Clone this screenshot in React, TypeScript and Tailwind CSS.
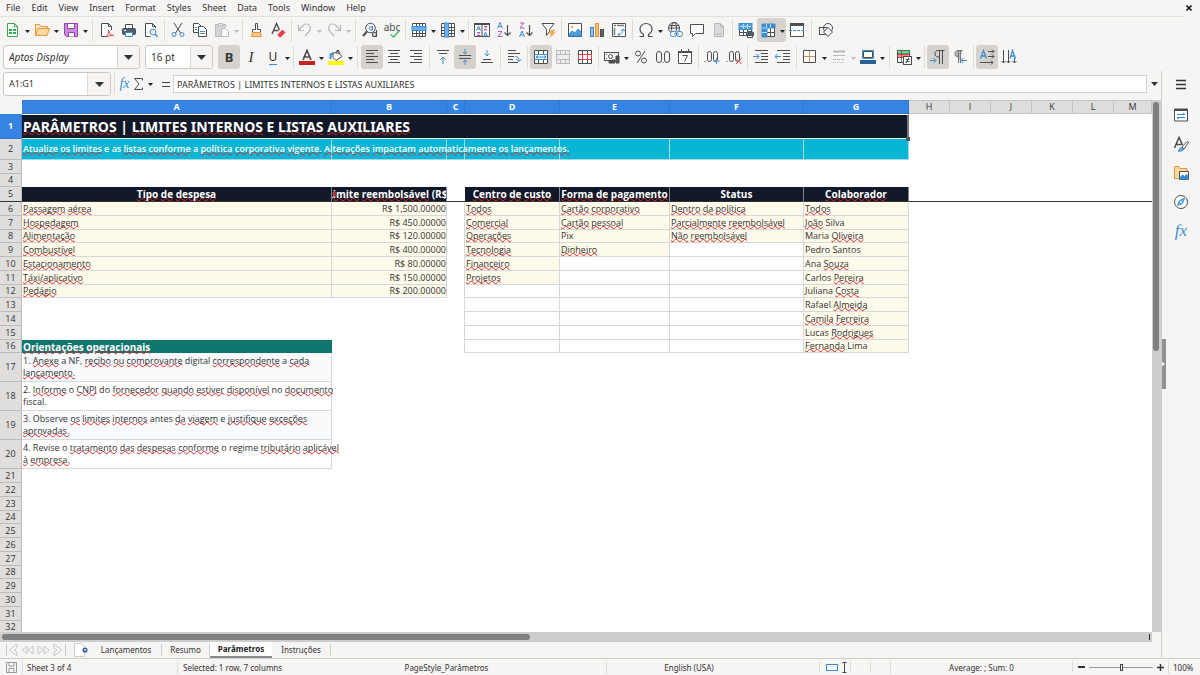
import type { ReactNode } from "react";

const FONT = "font-['Noto_Sans','Open_Sans',sans-serif]";

function Ico({ children, w = 16 }: { children: ReactNode; w?: number }) {
  return (
    <svg
      width={w}
      height="16"
      viewBox={`0 0 ${w} 16`}
      fill="none"
      stroke="#4d4d4d"
      strokeWidth="1"
      aria-hidden="true"
      className="shrink-0"
    >
      {children}
    </svg>
  );
}

function Caret({ dim }: { dim?: boolean }) {
  return (
    <svg width="5" height="3" viewBox="0 0 5 3" aria-hidden="true">
      <path d="M0 0h5L2.5 3z" fill={dim ? "#bdbdbd" : "#222"} />
    </svg>
  );
}

type ToolProps = {
  label: string;
  on?: boolean;
  menu?: boolean;
  dim?: boolean;
  children: ReactNode;
};

function Tool({ label, on, menu, dim, children }: ToolProps) {
  return (
    <button
      type="button"
      aria-label={label}
      aria-pressed={on}
      className={`flex h-6 shrink-0 items-center rounded-[3px] ${on ? "bg-[#d5d2ce]" : ""}`}
    >
      <span className={`flex w-[22px] justify-center ${dim ? "opacity-35" : ""}`}>{children}</span>
      {menu && (
        <span className="flex w-[7px] justify-center pt-0.5">
          <Caret dim={dim} />
        </span>
      )}
    </button>
  );
}

function Sep({ wide }: { wide?: boolean }) {
  return (
    <span className={`flex shrink-0 justify-center ${wide ? "w-[7px]" : "w-[5px]"}`}>
      <span className="h-[22px] w-px bg-[#dddbd8]" />
    </span>
  );
}

const BLUE = "#3b8fd0";
const PAGE = "M3.5 1.5h6l3 3v10h-9zM9.5 1.5v3h3";

function StandardBar() {
  return (
    <div className="flex h-[26px] items-center pl-0.5">
      <Tool label="New" menu>
        <Ico>
          <path d="M2.5 1.5h7l3 3v10h-10z" stroke="#35a853" fill="#fff" />
          <path d="M9.5 1.5v3h3" stroke="#35a853" />
          <rect x="4" y="7" width="7" height="5" fill="#35a853" stroke="none" />
          <path d="M4 9.5h7M7.5 7v5" stroke="#fff" />
        </Ico>
      </Tool>
      <Tool label="Open" menu>
        <Ico>
          <path d="M1.5 13.5v-11h4l1.5 2h6.5v2" fill="#fbe3bd" stroke="#e8943a" />
          <path d="M1.5 13.5l2.5-7h11.5l-2.5 7z" fill="#fcd9a0" stroke="#e8943a" />
        </Ico>
      </Tool>
      <Tool label="Save" menu>
        <Ico>
          <path d="M1.5 1.5h13v13h-11l-2-2z" fill="#c88bd8" stroke="#9a3fb0" />
          <path d="M4.5 1.5h7v5h-7z" fill="#fff" stroke="#9a3fb0" />
          <path d="M5.5 14.5v-4h6v4" fill="#fff" stroke="#9a3fb0" />
        </Ico>
      </Tool>
      <Sep wide />
      <Tool label="Export as PDF">
        <Ico>
          <path d="M12.5 8v-3.5l-3-3h-7v13h6" fill="#fff" />
          <path d="M9.5 1.5v3h3" />
          <path d="M7 15c2-2 3-4.5 2.5-7 .5 3 2 5 5 5.5-3-.5-6 .5-7.500 1.500z" stroke="#e0434b" />
        </Ico>
      </Tool>
      <Tool label="Print">
        <Ico>
          <rect x="1.5" y="6.5" width="13" height="6" rx="1" fill="#4f5f6c" stroke="#46535e" />
          <path d="M4.5 6V2.5h7V6" fill="#fff" />
          <path d="M4.5 10.5h7v4h-7z" fill="#fff" stroke={BLUE} />
          <path d="M3 8.5h2" stroke="#fff" />
        </Ico>
      </Tool>
      <Tool label="Print Preview">
        <Ico>
          <path d="M12.5 6V4.5l-3-3h-7v13h5" fill="#fff" />
          <path d="M9.5 1.5v3h3" />
          <circle cx="10" cy="10" r="3" stroke={BLUE} fill="#e6f2fb" />
          <path d="M12.2 12.2l2.5 2.5" stroke={BLUE} strokeWidth="1.5" />
        </Ico>
      </Tool>
      <Sep />
      <Tool label="Cut">
        <Ico>
          <path d="M4 1l6.5 10M12 1L5.5 11" />
          <circle cx="4" cy="12.5" r="2" stroke={BLUE} />
          <circle cx="12" cy="12.5" r="2" stroke={BLUE} />
        </Ico>
      </Tool>
      <Tool label="Copy">
        <Ico>
          <path d="M1.5 1.5h5l3 3v6h-8z" fill="#fff" />
          <path d="M6.5 4.5h5l3 3v7h-8z" fill="#fff" />
          <path d="M3 5.5h2M3 7.5h2M8 9.5h5M8 11.5h5" stroke={BLUE} />
        </Ico>
      </Tool>
      <Tool label="Paste" menu dim>
        <Ico>
          <path d="M7 14.5H1.5v-12h10v3" fill="#999" />
          <path d="M4.5 3.5v-2h4v2z" fill="#fff" />
          <path d="M7.5 6.5h4l3 3v5h-7z" fill="#fff" />
        </Ico>
      </Tool>
      <Sep />
      <Tool label="Clone Formatting">
        <Ico>
          <path d="M7.5 1.5h2v6h3v3h-8v-3h3z" fill="#fff" />
          <path d="M4.5 10.5h8l1 4h-10z" fill="#fbc98d" stroke="#e8943a" />
        </Ico>
      </Tool>
      <Tool label="Clear Direct Formatting">
        <Ico>
          <path d="M2 12L6.5 1.5 9.5 8M3.5 8.5h5" strokeWidth="1.4" />
          <path d="M8 12.5l4.5-4.5 2.5 2.5-4.5 4.5h-1z" fill="#e0434b" stroke="#e0434b" />
        </Ico>
      </Tool>
      <Sep />
      <Tool label="Undo" menu dim>
        <Ico>
          <path d="M1.5 3v5.500H7M2 8l4-4.500c2-2 5-2 6.500 0s1 4.500-1 6.500l-3.500 4" strokeWidth="1.200" />
        </Ico>
      </Tool>
      <Tool label="Redo" menu dim>
        <Ico>
          <path d="M14.500 3v5.500H9M14 8l-4-4.500c-2-2-5-2-6.500 0s-1 4.500 1 6.500l3.500 4" strokeWidth="1.200" />
        </Ico>
      </Tool>
      <Sep wide />
      <Tool label="Find and Replace">
        <Ico>
          <circle cx="8.500" cy="6" r="4.800" />
          <path d="M5 9.500L1 14" strokeWidth="2" />
          <path d="M10.500 4v4.500" stroke={BLUE} />
          <circle cx="8.800" cy="6.500" r="1.600" stroke={BLUE} />
          <circle cx="12.500" cy="12.500" r="2" fill="#f6f5f4" strokeWidth="1.200" />
          <path d="M14.500 8v7" strokeWidth="1.200" />
        </Ico>
      </Tool>
      <Tool label="Spelling">
        <span className="relative flex h-4 w-4 justify-center text-[10px] leading-[10px] text-[#4d4d4d]">
          abc
          <svg width="10" height="8" viewBox="0 0 10 8" className="absolute top-2 left-1.5" aria-hidden="true">
            <path d="M.5 4.500L3.500 7 9 1" fill="none" stroke="#35b86b" strokeWidth="1.400" />
          </svg>
        </span>
      </Tool>
      <Sep />
      <Tool label="Row" menu>
        <Ico>
          <path d="M1.5 1.5h13v13h-13zM1.5 11.5h13M5.5 1.5v13M8.5 1.5v13M11.5 1.5v13" fill="#fff" />
          <rect x="1" y="4.5" width="14" height="4" fill="#69b1e8" stroke={BLUE} />
        </Ico>
      </Tool>
      <Tool label="Column" menu>
        <Ico>
          <path d="M1.5 1.5h13v13h-13zM1.5 5.5h13M1.5 8.5h13M1.5 11.5h13M11.5 1.5v13" fill="#fff" />
          <rect x="4.500" y="1" width="4" height="14" fill="#69b1e8" stroke={BLUE} />
        </Ico>
      </Tool>
      <Sep />
      <Tool label="Sort">
        <Ico>
          <path d="M.5 1.5h15v13H.5zM8 2.500v12" fill="#fff" />
          <path d="M0 2h16" strokeWidth="2" />
          <path d="M2.500 8.500l2-4.500 2 4.500M3 7h3M9.500 14.500l2-4.500 2 4.500M10 13h3" stroke={BLUE} />
          <path d="M3 10.500h3l-3 3h3.500M10 4.500h3l-3 3.500h3.500" stroke="#b455c4" />
        </Ico>
      </Tool>
      <Tool label="Sort Ascending">
        <Ico>
          <path d="M1.5 6.5L4 .5l2.500 6M2.500 4.500h3" stroke={BLUE} />
          <path d="M2 9.500h4l-4 5h4.500" stroke="#b455c4" />
          <path d="M11.500 3v10.500M8.500 10.500l3 3 3-3" strokeWidth="1.200" />
        </Ico>
      </Tool>
      <Tool label="Sort Descending">
        <Ico>
          <path d="M2 1h4L2 6h4.500" stroke="#b455c4" />
          <path d="M1.500 15L4 9l2.500 6M2.500 13h3" stroke={BLUE} />
          <path d="M11.500 3v10.500M8.500 10.500l3 3 3-3" strokeWidth="1.200" />
        </Ico>
      </Tool>
      <Tool label="AutoFilter">
        <Ico>
          <path d="M2 1.500h12L9.500 7.500v2l-3 4v-6z" fill="#fff" />
          <path d="M11.500 8h3l-1.500 2.500h2L10.500 15l1-3.500h-2z" fill="#f7a94a" stroke="#f09a33" strokeWidth=".5" />
        </Ico>
      </Tool>
      <Sep />
      <Tool label="Insert Image">
        <Ico>
          <path d="M1.5 1.5h13v13h-13z" fill="#fff" />
          <path d="M2 14v-2l3-3 3 2 3-4 3 3v4z" fill="#4e9fdd" stroke={BLUE} />
          <circle cx="5" cy="5" r="1.200" fill="#f7a94a" stroke="none" />
        </Ico>
      </Tool>
      <Tool label="Insert Chart">
        <Ico>
          <rect x="1.5" y="5.5" width="3" height="9" fill="#8cc4ee" stroke={BLUE} />
          <rect x="6.5" y="1.5" width="3" height="13" fill="#fbc070" stroke="#e8943a" />
          <rect x="11.5" y="7.5" width="3" height="7" fill="#666" />
        </Ico>
      </Tool>
      <Tool label="Pivot Table">
        <Ico>
          <path d="M1.5 1.5h13v13h-13z" fill="#fff" />
          <path d="M3 3.5h2M6 3.5h7M3.5 6v7" strokeWidth="1.5" stroke="#777" />
          <path d="M7 12.5c4 0 5-2 5-5M10 9l2-2 2 2M9 10.5l-2 2 2 2" stroke={BLUE} />
        </Ico>
      </Tool>
      <Sep />
      <Tool label="Special Character" menu>
        <Ico>
          <path
            d="M1.500 14.500h4v-2C3 11 2 9 2 7c0-3 2.500-5.500 6-5.500S14 4 14 7c0 2-1 4-3.500 5.500v2h4"
            strokeWidth="1.200"
          />
        </Ico>
      </Tool>
      <Tool label="Insert Hyperlink">
        <Ico>
          <circle cx="7" cy="6" r="5.500" />
          <ellipse cx="7" cy="6" rx="2.500" ry="5.500" />
          <path d="M1.500 6h11M2.500 3.500h9" />
          <rect x="3.500" y="9.500" width="6" height="5" rx="2" fill="#f6f5f4" stroke={BLUE} />
          <rect x="9.500" y="9.500" width="6" height="5" rx="2" fill="#f6f5f4" stroke={BLUE} />
          <path d="M7 12h5" stroke={BLUE} />
        </Ico>
      </Tool>
      <Tool label="Insert Comment">
        <Ico>
          <path d="M1.5 2.5h13v9h-8l-3 3v-3h-2z" fill="#fff" />
        </Ico>
      </Tool>
      <Tool label="Headers and Footers" dim>
        <Ico>
          <path d={PAGE} fill="#aaa" />
          <path d="M5 12h6" />
        </Ico>
      </Tool>
      <Sep />
      <Tool label="Define Print Area">
        <Ico>
          <path d="M1.5 1.5h12v12h-12zM1.5 10.5h12M5.5 1.5v12M9.5 1.5v12" fill="#fff" />
          <rect x="1" y="1.5" width="13" height="6" fill="#4e9fdd" stroke={BLUE} />
          <path d="M5.5 2v5M9.5 2v5M2 4.5h11" stroke="#b9dcf5" />
          <rect x="8" y="10" width="8" height="4" fill="#4f5f6c" stroke="none" />
          <path d="M9.5 9.5h5M9.5 13.5h5v2h-5z" fill="#fff" />
        </Ico>
      </Tool>
      <Tool label="Freeze Rows and Columns" on menu>
        <Ico>
          <path d="M2.5 2.5h12v12h-12zM2.5 10.5h12M10.5 5v10" fill="#fff" />
          <path d="M2 2h13v4H7v9H2z" fill="#3b8fd0" stroke={BLUE} />
          <path d="M6.5 2v4M10.5 2v4M2 6h5M2 10.5h5" stroke="#b9dcf5" />
        </Ico>
      </Tool>
      <Tool label="Split Window">
        <Ico>
          <path d="M1.5 1.5h13v13h-13z" fill="#fff" />
          <path d="M1 2.5h14" strokeWidth="3" />
          <path d="M0 8.5h16" stroke={BLUE} strokeDasharray="3 1" />
        </Ico>
      </Tool>
      <Sep wide />
      <Tool label="Show Draw Functions">
        <Ico>
          <rect x="1.5" y="5.5" width="8" height="7" />
          <circle cx="10" cy="6" r="4.5" />
          <path d="M10 5.5l4.5 4.5-4.5 4.5L5.5 10z" fill="#f6f5f4" />
        </Ico>
      </Tool>
    </div>
  );
}

function Combo({ label, value, className, drop }: { label: string; value: string; className: string; drop: string }) {
  return (
    <div className={`flex h-6 shrink-0 overflow-hidden rounded-[3px] border border-[#cdc7c2] bg-white ${className}`}>
      <input aria-label={label} defaultValue={value} className="w-0 min-w-0 flex-1 bg-transparent pl-[5px] outline-none" />
      <button
        type="button"
        aria-label={`${label} list`}
        className={`flex items-center justify-center border-l border-[#dcd8d4] bg-[#f6f5f4] ${drop}`}
      >
        <svg width="9" height="5" viewBox="0 0 9 5" aria-hidden="true">
          <path d="M0 0h9L4.500 5z" fill="#333" />
        </svg>
      </button>
    </div>
  );
}

function Lines({ d }: { d: string }) {
  return (
    <Ico>
      <path d={d} />
    </Ico>
  );
}

function FormattingBar() {
  return (
    <div className="flex h-7 items-center pl-[3px]">
      <Combo label="Font Name" value="Aptos Display" className="w-[137px] text-[10px] italic" drop="w-[22px]" />
      <span className="w-[5px]" />
      <Combo label="Font Size" value="16 pt" className="w-[68px] text-[10px]" drop="w-[22px]" />
      <span className="w-[5px]" />
      <Tool label="Bold" on>
        <b className="text-[13px] leading-4">B</b>
      </Tool>
      <Tool label="Italic">
        <i className="font-['Liberation_Serif',serif] text-[15px] leading-4">I</i>
      </Tool>
      <Tool label="Underline" menu>
        <span className="border-b border-[#3b8fd0] text-[12px] leading-[14px]">U</span>
      </Tool>
      <Sep />
      <Tool label="Font Color" menu>
        <Ico>
          <path d="M4 11L8 1.500 12 11M5.500 8h5" strokeWidth="1.700" />
          <rect x="0" y="12" width="16" height="4" fill="#c9211e" stroke="none" />
        </Ico>
      </Tool>
      <Tool label="Highlighting" menu>
        <Ico>
          <path d="M5 4.500l5-2 4 5-6 4-3-3z" fill="#fff" />
          <path d="M9 5V1.500h2v4" />
          <path d="M2.500 10V5.500l3-1.500" stroke={BLUE} strokeWidth="2" />
          <rect x="0" y="12" width="16" height="4" fill="#ffff00" stroke="none" />
        </Ico>
      </Tool>
      <Sep wide />
      <Tool label="Align Left" on>
        <Lines d="M2 1.5h12M2 4.5h8M2 7.5h12M2 10.5h8M2 13.5h12" />
      </Tool>
      <Tool label="Center Horizontally">
        <Lines d="M2 1.5h12M4 4.5h8M2 7.5h12M4 10.5h8M2 13.5h12" />
      </Tool>
      <Tool label="Align Right">
        <Lines d="M2 1.5h12M6 4.5h8M2 7.5h12M6 10.5h8M2 13.5h12" />
      </Tool>
      <Sep />
      <Tool label="Align Top">
        <Ico>
          <path d="M2 1.5h12M4 4.5h8" />
          <path d="M8 15V8M5.5 10.5L8 8l2.500 2.500" stroke={BLUE} />
        </Ico>
      </Tool>
      <Tool label="Center Vertically" on>
        <Ico>
          <path d="M2 6.5h12M2 9.5h12" />
          <path d="M8 0v5M6 3l2 2 2-2M8 16v-5M6 13l2-2 2 2" stroke={BLUE} />
        </Ico>
      </Tool>
      <Tool label="Align Bottom">
        <Ico>
          <path d="M4 10.5h8M2 13.5h12" />
          <path d="M8 1v6M5.5 4.5L8 7l2.500-2.500" stroke={BLUE} />
        </Ico>
      </Tool>
      <Sep />
      <Tool label="Wrap Text">
        <Ico>
          <path d="M2 1.5h8M2 4.5h12M2 7.5h6M2 10.5h5M2 13.5h10" />
          <path d="M9 7.5c3 0 4 1 4 5M10.5 10l2.500 2.500 2.500-2.500" stroke={BLUE} />
        </Ico>
      </Tool>
      <Sep />
      <Tool label="Merge and Center Cells" on>
        <Ico>
          <path d="M1.5 1.5h13v13h-13zM5.5 1.5v4M10.5 1.5v4M5.5 11v3.500M10.5 11v3.500" fill="#fff" />
          <path d="M1.5 5.5h13M1.5 10.5h13" stroke={BLUE} />
          <path d="M3 8h10M5 6.500L3 8l2 1.500M11 6.500L13 8l-2 1.500" stroke={BLUE} />
        </Ico>
      </Tool>
      <Tool label="Merge Cells" dim>
        <Ico>
          <path
            d="M1.5 1.5h13v13h-13zM1.5 5.5h13M1.5 10.5h13M5.5 1.5v4M10.5 1.5v4M5.5 11v3.500M10.5 11v3.500"
            fill="#ddd"
          />
        </Ico>
      </Tool>
      <Tool label="Unmerge Cells">
        <Ico>
          <path d="M1.5 1.5h13v13h-13zM5.5 1.5v4M10.5 1.5v4M5.5 11v3.500M10.5 11v3.500" fill="#fff" />
          <path d="M1.5 5.5h13v5h-13zM5.5 5.5v5M10.5 5.5v5" stroke="#e0434b" />
        </Ico>
      </Tool>
      <Sep />
      <Tool label="Format as Currency" menu>
        <Ico>
          <rect x=".5" y="3.5" width="14" height="8" />
          <circle cx="6.5" cy="7.5" r="2" />
          <path d="M2 5.5h1M2 9.5h1" />
          <path d="M8 14V11h3v3zM12 14V7h3v7zM5 14v-2h3v2z" fill="#555" />
        </Ico>
      </Tool>
      <Tool label="Format as Percent">
        <Ico>
          <circle cx="5" cy="4.500" r="2.500" />
          <circle cx="11" cy="11.500" r="2.500" />
          <path d="M12 2l-8 12" />
        </Ico>
      </Tool>
      <Tool label="Format as Number">
        <Ico>
          <rect x="1.500" y="2.500" width="5" height="11" rx="2.500" />
          <rect x="9.500" y="2.500" width="5" height="11" rx="2.500" />
          <path d="M7.500 13.500h1" />
        </Ico>
      </Tool>
      <Tool label="Format as Date">
        <Ico>
          <path d="M1.5 2.5h13v12h-13z" fill="#fff" />
          <path d="M1 3h14" strokeWidth="2" />
          <path d="M4.5 0v3M11.5 0v3M5.5 6.5h5l-3 6" />
        </Ico>
      </Tool>
      <Sep />
      <Tool label="Add Decimal Place">
        <Ico>
          <rect x="3.500" y="2.500" width="4" height="10" rx="2" />
          <rect x="9.500" y="2.500" width="4" height="10" rx="2" />
          <path d="M.5 12.500h1" />
          <path d="M12.500 9v6M9.500 12h6" stroke={BLUE} />
        </Ico>
      </Tool>
      <Tool label="Delete Decimal Place">
        <Ico>
          <rect x="3.500" y="2.500" width="4" height="10" rx="2" />
          <rect x="9.500" y="2.500" width="4" height="10" rx="2" />
          <path d="M.5 12.500h1" />
          <path d="M10 9.500l5.500 5.500M15.500 9.500L10 15" stroke="#e0434b" />
        </Ico>
      </Tool>
      <Sep />
      <Tool label="Increase Indent">
        <Ico>
          <path d="M2 1.5h13M8 4.5h7M8 7.5h7M8 10.5h7M2 13.5h13" />
          <path d="M0 7.5h6M3.5 5L6 7.5 3.5 10" stroke={BLUE} />
        </Ico>
      </Tool>
      <Tool label="Decrease Indent">
        <Ico>
          <path d="M2 1.5h13M8 4.5h7M8 7.5h7M8 10.5h7M2 13.5h13" />
          <path d="M6 7.5H0M2.5 5L0 7.5 2.5 10" stroke={BLUE} />
        </Ico>
      </Tool>
      <Sep />
      <Tool label="Borders" menu>
        <Ico>
          <path d="M1.5 1.5h12v12h-12z" fill="#fff" />
          <path d="M7.5 2v11M2 7.5h11" stroke="#c98f5a" />
        </Ico>
      </Tool>
      <Tool label="Border Style" menu dim>
        <Ico>
          <path d="M2 2.5h12" strokeWidth="2" />
          <path d="M2 6.5h12" />
          <path d="M2 10.5h12" strokeDasharray="3 1" />
          <path d="M2 13.5h12" strokeDasharray="1 1" />
        </Ico>
      </Tool>
      <Tool label="Border Color" menu>
        <Ico>
          <path d="M2.5 1.5h11v8h-11z" fill="#fff" stroke={BLUE} />
          <path d="M3.5 2.5h9v6h-9z" />
          <rect x="0" y="11" width="16" height="4" fill="#2a6099" stroke="none" />
        </Ico>
      </Tool>
      <Sep wide />
      <Tool label="Conditional" menu>
        <Ico>
          <path d="M1.5 1.5h12v12h-12z" fill="#fff" />
          <rect x="1.5" y="1.5" width="12" height="3" fill="#7fd09a" stroke="#35a853" />
          <rect x="1.5" y="5.500" width="12" height="3" fill="#f0898d" stroke="#e0434b" />
          <path d="M1.5 1.5h12v12h-12zM5.5 1.5v12" strokeWidth=".7" />
          <rect x="7.5" y="7.5" width="8" height="8" fill="#fff" />
          <path d="M9.5 10.5h4M9.5 12.5h4M13 9l-3 5" />
        </Ico>
      </Tool>
      <Sep />
      <Tool label="Left-To-Right" on>
        <Ico>
          <path d="M9.5 15V1.5h5M12.5 15V1.5M9.5 1.5H8c-4 0-4 6.500 0 6.500h1" />
          <path d="M0 11.5h6M3.5 9L6 11.5 3.5 14" stroke={BLUE} />
        </Ico>
      </Tool>
      <Tool label="Right-To-Left">
        <Ico>
          <path d="M6.500 14V1.5h4M8.500 14V1.5M6.500 1.5H6c-4 0-4 6.500 0 6.500z" fill="#bbb" stroke="#777" />
          <path d="M15 11.5H9M11.5 9L9 11.5l2.500 2.500" stroke={BLUE} />
        </Ico>
      </Tool>
      <Sep />
      <Tool label="Text Direction Left To Right" on>
        <Ico>
          <path d="M1.5 9.500L4.500 1.500l3 8M2.500 7h4" stroke={BLUE} strokeWidth="1.300" />
          <path d="M9 2.500h6M13 .5l2 2-2 2M9 7.500h6M13 5.500l2 2-2 2M1 13.500h13M12 11.500l2 2-2 2" />
        </Ico>
      </Tool>
      <Tool label="Text Direction Top To Bottom">
        <Ico>
          <path d="M9 9.500l2.500-8 3 8M10 7h4" stroke={BLUE} strokeWidth="1.300" />
          <path d="M2.500 1v13M.5 12l2 2 2-2M7.500 1v13M5.500 12l2 2 2-2M13.500 9v5M11.500 12l2 2 2-2" />
        </Ico>
      </Tool>
    </div>
  );
}

function FormulaBar() {
  return (
    <div className="mb-[3px] flex h-[26px] items-center pl-[3px]">
      <Combo label="Name Box" value="A1:G1" className="w-[108px] text-[9px]" drop="w-[23px]" />
      <Sep wide />
      <button
        type="button"
        aria-label="Function Wizard"
        className="w-[13px] font-['Liberation_Serif',serif] text-[14px] leading-5 text-[#3b8fd0] italic"
      >
        fx
      </button>
      <button type="button" aria-label="Select Function" className="ml-0.5 flex w-[26px] items-center gap-1">
        <svg width="11" height="12" viewBox="0 0 11 12" fill="none" stroke="#4d4d4d" aria-hidden="true">
          <path d="M9.5 2.500V.5h-8l4.500 5.500-4.500 5.500h8v-2" />
        </svg>
        <Caret />
      </button>
      <button type="button" aria-label="Formula" className="flex w-3 flex-col gap-[3px] pl-[3px]">
        <span className="h-px w-2 bg-[#444]" />
        <span className="h-px w-2 bg-[#444]" />
      </button>
      <input
        aria-label="Input line"
        defaultValue="PARÂMETROS | LIMITES INTERNOS E LISTAS AUXILIARES"
        className="ml-[2px] h-[18px] min-w-0 flex-1 border border-[#d5d2ce] bg-white px-[3px] text-[9px] outline-none"
      />
      <button type="button" aria-label="Expand Formula Bar" className="flex w-[14px] justify-center">
        <svg width="7" height="4" viewBox="0 0 7 4" aria-hidden="true">
          <path d="M0 0h7L3.500 4z" fill="#333" />
        </svg>
      </button>
    </div>
  );
}

// words in [brackets] are flagged by the spell checker
function Spell({ text }: { text: string }) {
  return (
    <>
      {text.split(/[[\]]/).map((part, i) =>
        i % 2 ? (
          <span
            key={i}
            className="underline decoration-[#e02424] decoration-wavy decoration-1 underline-offset-[-1px] [text-decoration-skip-ink:none]"
          >
            {part}
          </span>
        ) : (
          part
        ),
      )}
    </>
  );
}

const columns = [
  { name: "A", width: 310 },
  { name: "B", width: 115 },
  { name: "C", width: 18 },
  { name: "D", width: 95 },
  { name: "E", width: 110 },
  { name: "F", width: 134 },
  { name: "G", width: 105 },
  { name: "H", width: 41 },
  { name: "I", width: 41 },
  { name: "J", width: 41 },
  { name: "K", width: 41 },
  { name: "L", width: 41 },
  { name: "M", width: 0 },
];

const heights = [
  25, 21, 14, 13, 15, 14, 14, 13, 14, 14, 14, 13, 14, 14, 14, 13, 29, 29, 29, 29, 14, 14, 14, 13, 14, 14, 14, 13, 14,
  14, 14, 13,
];

const expenses = [
  ["[Passagem] [aérea]", "R$ 1,500.00000"],
  ["[Hospedagem]", "R$ 450.00000"],
  ["[Alimentação]", "R$ 120.00000"],
  ["[Combustível]", "R$ 400.00000"],
  ["[Estacionamento]", "R$ 80.00000"],
  ["[Táxi/aplicativo]", "R$ 150.00000"],
  ["[Pedágio]", "R$ 200.00000"],
];

const lists: Record<string, string[]> = {
  D: ["[Todos]", "[Comercial]", "[Operações]", "[Tecnologia]", "[Financeiro]", "[Projetos]"],
  E: ["[Cartão] [corporativo]", "[Cartão] [pessoal]", "Pix", "[Dinheiro]"],
  F: ["[Dentro] [da] [política]", "[Parcialmente] [reembolsável]", "[Não] [reembolsável]"],
  G: [
    "[Todos]",
    "[João] Silva",
    "Maria [Oliveira]",
    "Pedro Santos",
    "Ana [Souza]",
    "Carlos [Pereira]",
    "Juliana [Costa]",
    "Rafael [Almeida]",
    "[Camila] [Ferreira]",
    "Lucas [Rodrigues]",
    "[Fernanda] Lima",
  ],
};

const headings: Record<string, string> = {
  A: "[Tipo] [de] [despesa]",
  B: "[Limite] [reembolsável] (R$)",
  D: "[Centro] [de] [custo]",
  E: "[Forma] [de] [pagamento]",
  F: "Status",
  G: "[Colaborador]",
};

const notes = [
  ["1. [Anexe] a NF, [recibo] [ou] [comprovante] digital [correspondente] a [cada]", "[lançamento.]"],
  ["2. [Informe] o [CNPJ] do [fornecedor] [quando] [estiver] [disponível] no [documento]", "fiscal."],
  ["3. Observe [os] [limites] [internos] antes [da] [viagem] e [justifique] [exceções]", "[aprovadas.]"],
  ["4. Revise o [tratamento] [das] [despesas] [conforme] o regime [tributário] [aplicável]", "[à] [empresa.]"],
];

const CREAM = "border-r border-b border-[#d5d8dc] bg-[#fffbeb]";
const PLAIN = "border-r border-b border-[#d5d8dc] bg-white";

function cell(row: number, col: string): ReactNode {
  if (row === 2 && col <= "G") {
    return (
      <td key={col} className="border-r border-b border-[#9fdde9] bg-[#06b6d4] p-0 pl-px font-semibold text-white">
        {col === "A" && (
          <span className="relative">
            <Spell text="[Atualize] [os] [limites] e as [listas] [conforme] a [política] [corporativa] [vigente.] [Alterações] [impactam] [automaticamente] [os] [lançamentos.]" />
          </span>
        )}
      </td>
    );
  }
  if (row === 5) {
    const text = headings[col];
    return (
      <td
        key={col}
        className={`relative overflow-hidden border-b border-b-[#333] p-0 text-[10px] font-bold text-white ${
          text ? "border-r border-r-[#7c828e] bg-[#111827]" : ""
        }`}
      >
        {text && (
          <div className="flex justify-center">
            <span>
              <Spell text={text} />
            </span>
          </div>
        )}
        {col === "B" && (
          <svg width="3" height="6" viewBox="0 0 3 6" className="absolute top-1 left-0" aria-hidden="true">
            <path d="M3 0v6L0 3z" fill="#e02424" />
          </svg>
        )}
      </td>
    );
  }
  if (row >= 6 && row <= 12 && (col === "A" || col === "B")) {
    return (
      <td key={col} className={`${CREAM} p-0 ${col === "B" ? "text-right" : "pl-px"}`}>
        <Spell text={expenses[row - 6][col === "A" ? 0 : 1]} />
      </td>
    );
  }
  if (row >= 6 && row <= 16 && lists[col]) {
    const text = lists[col][row - 6];
    return (
      <td key={col} className={`${text ? CREAM : PLAIN} p-0 pl-px`}>
        {text && <Spell text={text} />}
      </td>
    );
  }
  if (row >= 6 && row <= 16 && col === "C") {
    return <td key={col} className="border-r border-[#d5d8dc] p-0" />;
  }
  if (row === 16 && col === "A") {
    return (
      <td key={col} className="bg-[#0f766e] p-0 pl-px text-[10px] font-bold text-white">
        <Spell text="[Orientações] [operacionais]" />
      </td>
    );
  }
  if (row >= 17 && row <= 20 && col === "A") {
    return (
      <td key={col} className={`border-r border-b border-[#d5d8dc] p-0 pl-px ${row % 2 ? "bg-[#f8fafc]" : "bg-white"}`}>
        {notes[row - 17].map((line) => (
          <div key={line}>
            <Spell text={line} />
          </div>
        ))}
      </td>
    );
  }
  return <td key={col} className="p-0" />;
}

function Sheet() {
  return (
    <div className="min-h-0 min-w-0 flex-1 overflow-hidden bg-white">
      <table className="w-full table-fixed border-separate border-spacing-0 font-['Open_Sans','Noto_Sans',sans-serif] text-[9px] leading-3 whitespace-nowrap text-[#333]">
        <colgroup>
          <col className="w-[22px]" />
          {columns.map((c) => (
            <col key={c.name} style={c.width ? { width: c.width } : undefined} />
          ))}
        </colgroup>
        <thead>
          <tr className="h-[14px]">
            <th className="bg-[#f6f5f4] p-0" aria-label="Select all" />
            {columns.map((c) => (
              <th
                key={c.name}
                className={`border-t border-r border-b p-0 ${
                  c.name <= "G"
                    ? "border-[#2f76cf] bg-[#3584e4] font-bold text-white"
                    : "border-[#c4c3c1] bg-[#dfdedc] font-normal"
                }`}
              >
                {c.name}
              </th>
            ))}
          </tr>
        </thead>
        <tbody>
          {heights.map((h, i) => {
            const row = i + 1;
            return (
              <tr key={row} style={{ height: h }}>
                <th
                  className={`border-r border-b p-0 text-center ${
                    row === 1
                      ? "border-[#2f76cf] bg-[#3584e4] font-bold text-white"
                      : row === 5
                        ? "border-r-[#bdbcba] border-b-[#333] bg-[#dfdedc] font-normal"
                        : "border-[#bdbcba] bg-[#dfdedc] font-normal"
                  }`}
                >
                  {row}
                </th>
                {row === 1 ? (
                  <>
                    <td
                      colSpan={7}
                      className={`relative border-y border-r-2 border-white border-r-[#777] bg-[#111827] p-0 pl-px text-[14px] leading-[18px] font-bold text-white ${FONT}`}
                    >
                      <Spell text="[PARÂMETROS] | [LIMITES] [INTERNOS] E [LISTAS] [AUXILIARES]" />
                      <span className="absolute -right-[3px] -bottom-[3px] size-1 bg-[#555]" />
                    </td>
                    <td colSpan={6} className="p-0" />
                  </>
                ) : (
                  columns.map((c) => cell(row, c.name))
                )}
              </tr>
            );
          })}
        </tbody>
      </table>
    </div>
  );
}

function Sidebar() {
  return (
    <aside className="flex w-[39px] shrink-0 border-l border-[#d0cecb]">
      <div className="flex w-1 flex-col pt-[268px]">
        <button type="button" aria-label="Hide sidebar" className="flex h-[50px] w-1 items-center bg-[#919191]">
          <svg width="3" height="4" viewBox="0 0 3 4" aria-hidden="true">
            <path d="M0 0l3 2-3 2z" fill="#fff" />
          </svg>
        </button>
      </div>
      <nav className="flex flex-1 flex-col items-center gap-[13px] pt-[5px] pr-1">
        <button type="button" aria-label="Sidebar Settings" className="mb-0.5">
          <Ico>
            <path d="M3 4.5h10M3 8.5h10M3 12.5h10" strokeWidth="1.5" stroke="#333" />
          </Ico>
        </button>
        <button type="button" aria-label="Properties">
          <Ico>
            <path d="M1.5 2h13v12h-13z" fill="#fff" />
            <path d="M1 3h14" strokeWidth="2" />
            <path d="M4 7.500h8l-2-1.500M12 10.500H4l2 1.500" stroke={BLUE} />
          </Ico>
        </button>
        <button type="button" aria-label="Styles">
          <Ico>
            <path d="M1.5 12L6 1.500 9.500 9M3.500 8.500h5" strokeWidth="1.500" />
            <path d="M9 11l5-5.500 1.500 1L11 13z" fill="#fff" />
            <path d="M5 15c2 0 1-3.500 4-3.500l1.500 1.500c0 2-3 2.500-5.500 2z" fill="#69b1e8" stroke={BLUE} />
          </Ico>
        </button>
        <button type="button" aria-label="Gallery">
          <Ico>
            <path d="M1.5 13.5v-12h4l1.500 2h7v10z" fill="#fcd9a0" stroke="#e8943a" />
            <path d="M6.5 6.5h9v8h-9z" fill="#fff" />
            <path d="M7 14v-1.500l2.500-2.500 2 1.500 2-2 1.500 2V14z" fill="#3b8fd0" stroke={BLUE} />
          </Ico>
        </button>
        <button type="button" aria-label="Navigator">
          <Ico>
            <circle cx="8" cy="8" r="6.5" fill="#fff" />
            <path d="M11.5 4.5L9.5 9.5 4.5 11.5l2-5z" fill="#69b1e8" stroke={BLUE} />
            <circle cx="8" cy="8" r="1" fill="#fff" stroke="none" />
          </Ico>
        </button>
        <button
          type="button"
          aria-label="Functions"
          className="h-4 font-['Liberation_Serif',serif] text-[17px] leading-4 text-[#3b8fd0] italic"
        >
          fx
        </button>
      </nav>
    </aside>
  );
}

function SheetTabs() {
  return (
    <div className="flex h-4 items-center text-[8px] leading-3">
      <div className="flex w-[74px] pl-1.5">
        <svg width="60" height="14" viewBox="0 0 60 14" fill="none" stroke="#cbc9c7" aria-hidden="true">
          <path d="M.5 1v12M11 1L3 7l8 6V9l-3-2 3-2zM21 3l-5 4 5 4zM27 3l-5 4 5 4zM32 3l5 4-5 4zM38 3l5 4-5 4zM48 1l8 6-8 6V9l3-2-3-2zM59.500 1v12" />
        </svg>
      </div>
      <button type="button" aria-label="Add Sheet" className="flex w-[17px]">
        <svg width="14" height="14" viewBox="0 0 14 14" fill="none" aria-hidden="true">
          <path d="M.5.500h7l3 3v10H.5z" fill="#fff" stroke="#d0cecb" />
          <circle cx="11" cy="7" r="1.800" stroke="#2c5fa8" strokeWidth="1.500" />
        </svg>
      </button>
      <button type="button" className="w-[71px] border-r border-[#cfcdca]">
        Lançamentos
      </button>
      <button type="button" className="w-12 border-r border-[#cfcdca]">
        Resumo
      </button>
      <button type="button" className="h-4 w-[62px] border-b-2 border-[#8a8a8a] bg-white font-bold text-[#222]">
        Parâmetros
      </button>
      <button type="button" className="w-[59px] border-r border-[#cfcdca]">
        Instruções
      </button>
    </div>
  );
}

function StatusBar() {
  const line = "border-l border-[#dddbd8]";
  return (
    <footer className="flex h-[17px] items-center border-t border-[#d0cecb] text-[8px] leading-[13px] whitespace-nowrap">
      <div className="flex w-[22px] justify-center">
        <svg width="11" height="11" viewBox="0 0 11 11" fill="none" stroke="#999" aria-hidden="true">
          <path d="M.5.500h10v10h-10zM3 .5v3.500h5V.5M3 10.500v-4h5v4" />
        </svg>
      </div>
      <div className={`w-[155px] pl-1 ${line}`}>Sheet 3 of 4</div>
      <div className={`flex-1 pl-[5px] ${line}`}>Selected: 1 row, 7 columns</div>
      <div className="w-[319px] shrink-0 text-center">PageStyle_Parâmetros</div>
      <div className={`w-[213px] shrink-0 pr-12 text-center ${line}`}>English (USA)</div>
      <div className={`flex w-[31px] items-center gap-1 pl-1.5 ${line}`}>
        <span className="h-[7px] w-3 border border-[#3b8fd0]" />
        <svg width="5" height="11" viewBox="0 0 5 11" stroke="#444" fill="none" aria-hidden="true">
          <path d="M.5.500h4M2.500.500v10M.5 10.500h4" />
        </svg>
      </div>
      <div className={`h-3 w-5 ${line}`} />
      <div className={`h-3 w-5 ${line}`} />
      <div className={`w-[182px] shrink-0 text-center ${line}`}>Average: ; Sum: 0</div>
      <div className={`flex h-3 w-24 shrink-0 items-center gap-1 pl-[5px] ${line}`}>
        <button type="button" aria-label="Zoom out" className="h-[2px] w-[7px] bg-[#333]" />
        <input
          type="range"
          aria-label="Zoom"
          min={20}
          max={180}
          defaultValue={100}
          className="h-2 w-16 appearance-none bg-[linear-gradient(#999,#999)] bg-[length:100%_1px] bg-center bg-no-repeat [&::-webkit-slider-thumb]:h-[7px] [&::-webkit-slider-thumb]:w-[3px] [&::-webkit-slider-thumb]:appearance-none [&::-webkit-slider-thumb]:border [&::-webkit-slider-thumb]:border-[#444] [&::-webkit-slider-thumb]:bg-white"
        />
        <button type="button" aria-label="Zoom in" className="flex">
          <svg width="7" height="7" viewBox="0 0 7 7" stroke="#333" strokeWidth="1.5" aria-hidden="true">
            <path d="M3.5 0v7M0 3.500h7" />
          </svg>
        </button>
      </div>
      <div className={`w-8 shrink-0 pl-1 ${line}`}>100%</div>
    </footer>
  );
}

const menus = ["File", "Edit", "View", "Insert", "Format", "Styles", "Sheet", "Data", "Tools", "Window", "Help"];

export default function App() {
  return (
    <div className={`flex h-screen flex-col overflow-hidden bg-[#f6f5f4] text-[#333] ${FONT}`}>
      <header className="mr-4 flex h-[17px] items-center border-b border-[#e2e0dd] pl-1.5 text-[9px] leading-4">
        <nav className="flex gap-[11px]">
          {menus.map((m) => (
            <button key={m} type="button">
              {m}
            </button>
          ))}
        </nav>
        <button type="button" aria-label="Close Document" className="-mr-2 ml-auto">
          <svg width="6" height="6" viewBox="0 0 6 6" stroke="#222" strokeWidth="1.600" aria-hidden="true">
            <path d="M.5.500l5 5M5.500.500l-5 5" />
          </svg>
        </button>
      </header>
      <StandardBar />
      <FormattingBar />
      <div className="flex min-h-0 flex-1">
        <main className="flex min-w-0 flex-1 flex-col">
          <FormulaBar />
          <div className="flex min-h-0 flex-1">
            <Sheet />
            <div className="w-[9px] shrink-0 bg-[#cdcdcd] px-px pt-0.5">
              <div className="h-[47%] w-1.5 rounded-full bg-[#7f7f7f]" />
            </div>
          </div>
          <div className="mr-[9px] flex h-2.5 items-center justify-between bg-[#cdcdcd] px-0.5">
            <div className="h-1.5 w-[46%] rounded-full bg-[#7f7f7f]" />
            <div className="h-1.5 w-px bg-[#222]" />
          </div>
          <SheetTabs />
        </main>
        <Sidebar />
      </div>
      <StatusBar />
    </div>
  );
}
